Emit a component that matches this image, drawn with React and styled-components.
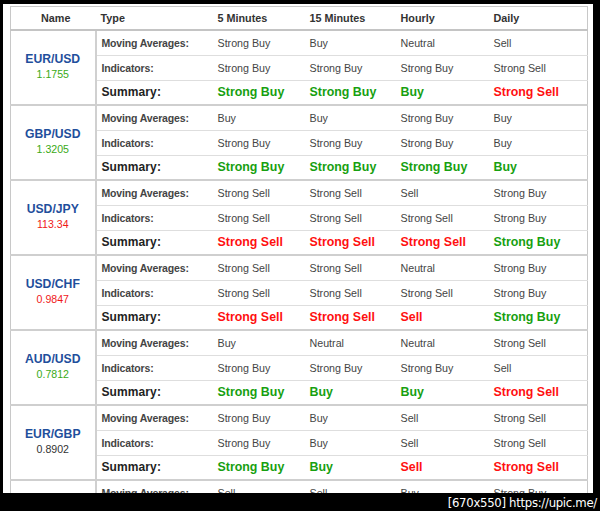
import React from "react";
import styled, { createGlobalStyle } from "styled-components";

const GlobalStyle = createGlobalStyle`
  html, body {
    margin: 0;
    padding: 0;
    background: #000;
  }
  body {
    font-family: "Liberation Sans", Arial, sans-serif;
  }
`;

const GREEN = "#17a010";
const RED = "#ff1010";

const rows = [
  {
    pair: "EUR/USD",
    price: "1.1755",
    priceColor: "#3aaa16",
    ma: ["Strong Buy", "Buy", "Neutral", "Sell"],
    ind: ["Strong Buy", "Strong Buy", "Strong Buy", "Strong Sell"],
    sum: ["Strong Buy", "Strong Buy", "Buy", "Strong Sell"],
  },
  {
    pair: "GBP/USD",
    price: "1.3205",
    priceColor: "#3aaa16",
    ma: ["Buy", "Buy", "Strong Buy", "Buy"],
    ind: ["Strong Buy", "Strong Buy", "Strong Buy", "Buy"],
    sum: ["Strong Buy", "Strong Buy", "Strong Buy", "Buy"],
  },
  {
    pair: "USD/JPY",
    price: "113.34",
    priceColor: "#f01818",
    ma: ["Strong Sell", "Strong Sell", "Sell", "Strong Buy"],
    ind: ["Strong Sell", "Strong Sell", "Strong Sell", "Strong Buy"],
    sum: ["Strong Sell", "Strong Sell", "Strong Sell", "Strong Buy"],
  },
  {
    pair: "USD/CHF",
    price: "0.9847",
    priceColor: "#f01818",
    ma: ["Strong Sell", "Strong Sell", "Neutral", "Strong Buy"],
    ind: ["Strong Sell", "Strong Sell", "Strong Sell", "Strong Buy"],
    sum: ["Strong Sell", "Strong Sell", "Sell", "Strong Buy"],
  },
  {
    pair: "AUD/USD",
    price: "0.7812",
    priceColor: "#3aaa16",
    ma: ["Buy", "Neutral", "Neutral", "Strong Sell"],
    ind: ["Strong Buy", "Strong Buy", "Strong Buy", "Sell"],
    sum: ["Strong Buy", "Buy", "Buy", "Strong Sell"],
  },
  {
    pair: "EUR/GBP",
    price: "0.8902",
    priceColor: "#333",
    ma: ["Strong Buy", "Buy", "Sell", "Strong Sell"],
    ind: ["Strong Buy", "Buy", "Sell", "Strong Sell"],
    sum: ["Strong Buy", "Buy", "Sell", "Strong Sell"],
  },
  {
    pair: "USD/CAD",
    price: "1.2510",
    priceColor: "#3aaa16",
    ma: ["Sell", "Sell", "Buy", "Strong Buy"],
    ind: ["Sell", "Sell", "Neutral", "Strong Buy"],
    sum: ["Sell", "Sell", "Buy", "Strong Buy"],
  },
];

const signalColor = (v) => {
  if (v.includes("Buy")) return GREEN;
  if (v.includes("Sell")) return RED;
  return "#333";
};

const Screen = styled.div`
  width: 600px;
  height: 511px;
  display: flex;
  flex-direction: column;
  background: #000;
  overflow: hidden;
`;

const Viewer = styled.div`
  height: 487px;
  flex-shrink: 0;
  margin: 4px 7px 0 3px;
  background: #fff;
  overflow: hidden;
  padding: 2px 6px 0 7px;
`;

const Caption = styled.div`
  height: 20px;
  display: flex;
  justify-content: flex-end;
  align-items: center;
  padding-right: 3px;
  color: #fff;
  font-family: "DejaVu Sans Condensed", "DejaVu Sans", sans-serif;
  font-size: 13px;
  letter-spacing: -0.3px;
`;

const Table = styled.table`
  width: 577px;
  table-layout: fixed;
  border-collapse: collapse;
  border: 1px solid #c8c8c8;
  color: #444;
`;

const HeadCell = styled.th`
  height: 22px;
  padding: 0 0 0 5px;
  text-align: ${(p) => (p.$center ? "center" : "left")};
  font-size: 10.8px;
  font-weight: bold;
  color: #333;
  border-bottom: 2px solid #c4c4c4;
`;

const NameCell = styled.td`
  text-align: center;
  vertical-align: middle;
  border-right: 2px solid #d0d0d0;
  border-bottom: 2px solid #cfcfcf;
  padding: 0 0 2px;
`;

const Pair = styled.div`
  color: #1f4f9c;
  font-weight: bold;
  font-size: 12.2px;
  line-height: 15px;
`;

const Price = styled.div`
  color: ${(p) => p.$color};
  font-size: 10.6px;
  line-height: 14px;
`;

const Row = styled.tr`
  height: 25px;
  border-bottom: ${(p) => (p.$last ? "2px solid #cfcfcf" : "1px solid #dedede")};
`;

const Label = styled.td`
  padding: 0 0 0 5px;
  font-weight: bold;
  white-space: nowrap;
  color: ${(p) => (p.$summary ? "#222" : "#444")};
  font-size: ${(p) => (p.$summary ? "12px" : "10.5px")};
  letter-spacing: ${(p) => (p.$summary ? "0.1px" : "-0.15px")};
`;

const Value = styled.td`
  padding: 0 0 0 5px;
  white-space: nowrap;
  font-size: 10.7px;
  color: #444;
`;

const SummaryValue = styled.td`
  padding: 0 0 0 5px;
  white-space: nowrap;
  font-size: 12.4px;
  font-weight: bold;
  color: ${(p) => p.$color};
`;

const App = () => (
  <Screen>
    <GlobalStyle />
    <Viewer>
      <Table>
        <colgroup>
          <col style={{ width: 85 }} />
          <col style={{ width: 117 }} />
          <col style={{ width: 92 }} />
          <col style={{ width: 91 }} />
          <col style={{ width: 93 }} />
          <col style={{ width: 99 }} />
        </colgroup>
        <thead>
          <tr>
            <HeadCell $center>Name</HeadCell>
            <HeadCell>Type</HeadCell>
            <HeadCell>5 Minutes</HeadCell>
            <HeadCell>15 Minutes</HeadCell>
            <HeadCell>Hourly</HeadCell>
            <HeadCell>Daily</HeadCell>
          </tr>
        </thead>
        <tbody>
          {rows.map((r) => (
            <React.Fragment key={r.pair}>
              <Row>
                <NameCell rowSpan={3}>
                  <Pair>{r.pair}</Pair>
                  <Price $color={r.priceColor}>{r.price}</Price>
                </NameCell>
                <Label>Moving Averages:</Label>
                {r.ma.map((v, i) => (
                  <Value key={i}>{v}</Value>
                ))}
              </Row>
              <Row>
                <Label>Indicators:</Label>
                {r.ind.map((v, i) => (
                  <Value key={i}>{v}</Value>
                ))}
              </Row>
              <Row $last>
                <Label $summary>Summary:</Label>
                {r.sum.map((v, i) => (
                  <SummaryValue key={i} $color={signalColor(v)}>
                    {v}
                  </SummaryValue>
                ))}
              </Row>
            </React.Fragment>
          ))}
        </tbody>
      </Table>
    </Viewer>
    <Caption>[670x550] https://upic.me/</Caption>
  </Screen>
);

export default App;
